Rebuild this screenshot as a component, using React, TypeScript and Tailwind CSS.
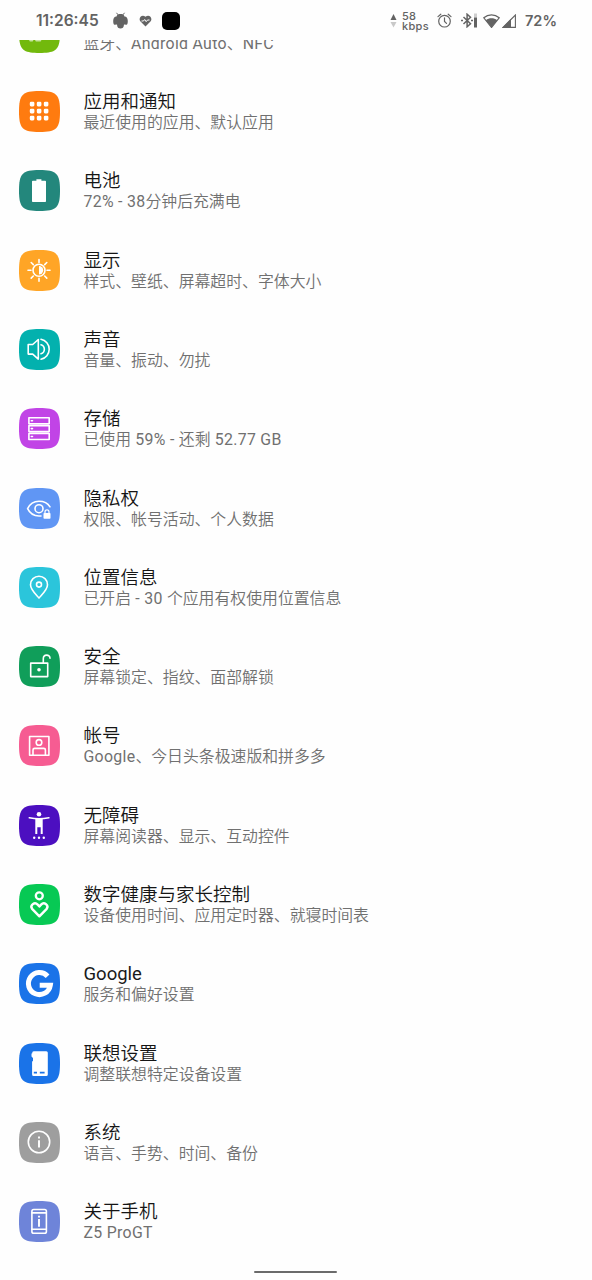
import type { ReactNode } from 'react';

interface SettingItem {
  title?: string;
  summary: string;
  color: string;
  icon: ReactNode;
}

const items: SettingItem[] = [
  {
    summary: '蓝牙、Android Auto、NFC',
    color: '#72b90c',
    icon: <path d="M11 28.6h2.500M17 28.600h4.500" strokeWidth="1.6" opacity=".6" />,
  },
  {
    title: '应用和通知',
    summary: '最近使用的应用、默认应用',
    color: '#ff7b0f',
    icon: (
      <g fill="#fff" stroke="none">
        {[13, 20, 27].map((y) =>
          [13, 20, 27].map((x) => (
            <rect key={`${x}-${y}`} x={x - 2.2} y={y - 2.2} width="4.6" height="4.6" rx="1.3" />
          ))
        )}
      </g>
    ),
  },
  {
    title: '电池',
    summary: '72% - 38分钟后充满电',
    color: '#23877c',
    icon: (
      <path
        d="M17.4 9.2h5v1.6h3.8q.8 0 .8.8v19.6q0 .8-.8.8H13.8q-.8 0-.8-.8V11.6q0-.8.8-.8h3.6z"
        fill="#fff"
        stroke="none"
      />
    ),
  },
  {
    title: '显示',
    summary: '样式、壁纸、屏幕超时、字体大小',
    color: '#ffa526',
    icon: (
      <>
        <circle cx="20" cy="20.3" r="6" />
        <path d="M20 16.1a4.2 4.2 0 0 1 0 8.4z" fill="#fff" stroke="none" />
        <path d="M20 9.5v3M20 28.2v3M9 20.3h3M28 20.3h3M12.2 12.5l2.1 2.1M25.7 26l2.1 2.1M12.2 28.1l2.1-2.1M25.7 14.6l2.1-2.1" />
      </>
    ),
  },
  {
    title: '声音',
    summary: '音量、振动、勿扰',
    color: '#03b1ae',
    icon: (
      <path d="M19.3 10.5v19.6l-5.6-5H9.2v-9.6h4.5zM22 10.200a10.200 10.200 0 0 1 0 20M22 15.800a4.700 4.700 0 0 1 0 9" />
    ),
  },
  {
    title: '存储',
    summary: '已使用 59% - 还剩 52.77 GB',
    color: '#c144e6',
    icon: (
      <>
        <path d="M9.9 9.7h20.3v6H9.9zM9.9 17.6h20.3v6H9.9zM9.9 25.5h20.3v6H9.9z" />
        <path d="M12.300 12.700h1.200M12.300 20.600h1.200M12.300 28.500h1.200" />
      </>
    ),
  },
  {
    title: '隐私权',
    summary: '权限、帐号活动、个人数据',
    color: '#6096f4',
    icon: (
      <>
        <path d="M31 18.8C29 15.500 25 13.200 20 13.200c-5.500 0-9.500 3.300-11.400 7.500 1.900 4 5.900 7.300 11.400 7.300h2" />
        <circle cx="20" cy="20.7" r="4" />
        <rect x="24.5" y="25" width="7" height="5.8" rx=".8" fill="#fff" stroke="none" />
        <path d="M26 25.5v-1.6a2 2 0 0 1 4 0v1.6" strokeWidth="1.2" />
      </>
    ),
  },
  {
    title: '位置信息',
    summary: '已开启 - 30 个应用有权使用位置信息',
    color: '#2bc5db',
    icon: (
      <>
        <path d="M20 31c-1.5-2-8.500-8-8.500-13.300a8.500 8.500 0 0 1 17 0C28.500 23 21.500 29 20 31z" />
        <circle cx="20" cy="17.6" r="2.5" />
      </>
    ),
  },
  {
    title: '安全',
    summary: '屏幕锁定、指纹、面部解锁',
    color: '#109e5a',
    icon: (
      <>
        <path d="M11.7 17.1h17v13.5h-17zM24.3 17v-4.3c0-4.700 6.700-4.700 6.700-.4" />
        <circle cx="20" cy="23.8" r="1.8" fill="#fff" stroke="none" />
      </>
    ),
  },
  {
    title: '帐号',
    summary: 'Google、今日头条极速版和拼多多',
    color: '#f65c92',
    icon: (
      <>
        <path d="M10.6 11.5h19.3v18.7H10.6zM14 30v-5q0-1.6 1.6-1.6h9.2q1.6 0 1.6 1.6v5" />
        <circle cx="20" cy="17.4" r="2.8" />
      </>
    ),
  },
  {
    title: '无障碍',
    summary: '屏幕阅读器、显示、互动控件',
    color: '#4c0fc0',
    icon: (
      <>
        <g fill="#fff" stroke="none">
          <circle cx="20" cy="9.2" r="2.3" />
          <circle cx="15.2" cy="32.8" r="1.2" />
          <circle cx="20" cy="32.8" r="1.2" />
          <circle cx="24.8" cy="32.8" r="1.2" />
          <path d="M16.3 13.5h7.4V29h-2v-6.700h-3.400V29h-2z" />
        </g>
        <path d="M10.3 12.7q9.7 2.2 19.6 0" />
      </>
    ),
  },
  {
    title: '数字健康与家长控制',
    summary: '设备使用时间、应用定时器、就寝时间表',
    color: '#07c954',
    icon: (
      <>
        <circle cx="20.3" cy="11.8" r="3.5" strokeWidth="2.3" />
        <path
          d="M20.4 32.3l-7.3-7.5c-2.500-3.500 2.500-7.600 5.600-4.200l1.700 1.900 1.700-1.900c3.100-3.400 8.100.7 5.600 4.200z"
          strokeWidth="2.4"
        />
      </>
    ),
  },
  {
    title: 'Google',
    summary: '服务和偏好设置',
    color: '#1a73e8',
    icon: (
      <path d="M28.6 13.2A11 11 0 1 0 31.300 22.300H20.700" strokeWidth="5" strokeLinecap="butt" strokeLinejoin="miter" />
    ),
  },
  {
    title: '联想设置',
    summary: '调整联想特定设备设置',
    color: '#1a73e8',
    icon: (
      <>
        <path
          d="M14.8 8.300h12.500q1.500 0 1.500 1.500v21.600q0 1.500-1.500 1.500H14.600q-1.500 0-1.500-1.500V18.300h.9v-3.300l-1.500-1.500V10.500h.6q0-2.200 1.700-2.200z"
          fill="#fff"
          stroke="none"
        />
        <path d="M14.800 29.600h3.200M20.800 29.600h4.800" stroke="#1a73e8" strokeWidth="1.9" strokeLinecap="butt" />
      </>
    ),
  },
  {
    title: '系统',
    summary: '语言、手势、时间、备份',
    color: '#9e9e9e',
    icon: (
      <>
        <circle cx="20" cy="20" r="10.7" />
        <path d="M20 18.300v7.200M20 14.500v1.900" strokeWidth="1.900" strokeLinecap="butt" />
      </>
    ),
  },
  {
    title: '关于手机',
    summary: 'Z5 ProGT',
    color: '#6e84d9',
    icon: (
      <>
        <rect x="12.9" y="8.5" width="14.5" height="23.7" rx="1.8" />
        <path d="M13 11.9h14M13 28.3h14" />
        <path d="M20 18v7.800M20 14.700v1.800" strokeWidth="1.900" strokeLinecap="butt" />
      </>
    ),
  },
];

// Latin runs are set a little wider than the Chinese text around them
const Summary = ({ text }: { text: string }) => (
  <div className="text-[15.87px] leading-[22px] font-[350] text-[#707070]">
    {text.split(/([ -~]+)/).map((part, i) =>
      i % 2 ? (
        <span key={i} className="font-normal tracking-[0.3px]">
          {part}
        </span>
      ) : (
        part
      )
    )}
  </div>
);

const SettingRow = ({ item }: { item: SettingItem }) => (
  <li className="flex h-[79.32px] shrink-0 items-center pl-[19px]">
    <svg
      className="h-[41px] w-[41px] shrink-0"
      viewBox="0 0 41 41"
      fill="none"
      stroke="#fff"
      strokeWidth="1.6"
      strokeLinecap="round"
      strokeLinejoin="round"
    >
      <path
        d="M0 20.5C0 3.500 3.500 0 20.500 0S41 3.500 41 20.500 37.500 41 20.500 41 0 37.500 0 20.500z"
        fill={item.color}
        stroke="none"
      />
      {item.icon}
    </svg>
    <div className="ml-[23.5px] whitespace-nowrap">
      <div
        className={
          item.title === 'Google'
            ? 'h-[23px] text-[18.5px] leading-[27px] font-normal text-[#1a1a1a]'
            : 'h-[23px] text-[18.5px] leading-[26px] font-[350] text-[#151515]'
        }
      >
        {item.title}
      </div>
      <Summary text={item.summary} />
    </div>
  </li>
);

const StatusBar = () => (
  <header className="flex h-10 shrink-0 items-center pl-[36px] font-['Inter',sans-serif] text-[#636363]">
    <span className="mt-[1px] w-[77px] text-[15.5px] leading-5 font-semibold">11:26:45</span>
    <svg className="mt-[1px] h-[17px] w-[15px]" viewBox="0 0 15 17" fill="currentColor">
      <path d="M3.5 4.5C4 2.500 5.500 2 7.500 2s3.500.5 4 2.500c2.200 0 3.300 2 3.300 4.500 0 2-.5 3.800-1.300 3.800L11 12.500c-.2 3-1.500 4-3.500 4s-3.300-1-3.500-4l-2.500.3C.7 12.800.2 11 .2 9c0-2.500 1.100-4.500 3.300-4.500z" />
      <path d="M3.500.8l1.500 2M11.500.8l-1.500 2" stroke="currentColor" />
    </svg>
    <svg className="mt-[2px] ml-[11px] h-[12px] w-[13px]" viewBox="0 0 13 12">
      <path d="M6.500 11.500L1.300 6.300C-1 3 3-1.500 6.500 1.800 10-1.500 14 3 11.700 6.300z" fill="currentColor" />
      <path d="M2.500 6h2l1.200-1.500 1.500 2.200L8.500 5h2" stroke="#fff" fill="none" />
    </svg>
    <div className="mt-[2px] ml-[10px] h-[18px] w-[18px] rounded-[5px] bg-black" />

    <svg className="ml-[210px] h-[15px] w-[7px]" viewBox="0 0 7 15">
      <path d="M3.500 1l3 6h-6z" fill="currentColor" />
      <path d="M3.500 14.500l-3-5.500h6z" fill="#c9c9c9" />
    </svg>
    <div className="mt-[1px] ml-[5px] w-[35px] text-[11px] leading-[10px] font-medium">
      <div className="tracking-[0.3px]">58</div>
      <div className="tracking-[0.3px]">kbps</div>
    </div>
    <svg className="mt-[1px] h-[15px] w-[15px]" viewBox="0 0 15 15" fill="none" stroke="currentColor" strokeWidth="1.2" strokeLinecap="round">
      <circle cx="7.5" cy="8.200" r="5.800" />
      <path d="M7.500 4.800v3.600l2 2M1 3.600L3.800 1.200M14 3.600l-2.800-2.400" />
    </svg>
    <svg className="mt-[1px] ml-[9px] h-[15px] w-[17px]" viewBox="0 0 17 15" fill="none">
      <path d="M2.500 4l7 6.800-3.400 3V1.200l3.400 3-7 6.800" stroke="currentColor" strokeWidth="1.500" />
      <path d="M0 7.500h2M10 7.500h2" stroke="currentColor" strokeWidth="1.600" />
      <path d="M14.500.5v4" stroke="#cfcfcf" strokeWidth="3" />
      <path d="M14.500 4.500v10" stroke="currentColor" strokeWidth="3" />
    </svg>
    <svg className="mt-[1px] ml-[5px] h-[14px] w-[17px]" viewBox="0 0 17 14">
      <path d="M8.500 13.500L.8 3.800c4.500-4 10.900-4 15.400 0z" fill="none" stroke="currentColor" strokeWidth="1.200" />
      <path d="M8.500 13.500L2.800 6.300c3.500-2.600 7.900-2.600 11.400 0z" fill="currentColor" />
    </svg>
    <svg className="mt-[1px] ml-[2px] h-[14px] w-[14px]" viewBox="0 0 14 14">
      <path d="M1 13.400L13.400 1v12.400z" fill="none" stroke="currentColor" strokeWidth="1.100" />
      <path d="M.5 13.500l8.500-8.500v8.500z" fill="currentColor" />
    </svg>
    <span className="mt-[1px] ml-[9px] text-[14.5px] leading-5 font-semibold">72%</span>
  </header>
);

const App = () => {
  return (
    <main className="flex h-[1280px] w-[592px] flex-col overflow-hidden bg-[#fefefe] font-['Roboto','Noto_Sans_CJK_SC',sans-serif]">
      <StatusBar />
      <div className="h-[1224px] shrink-0 overflow-hidden">
        <ul className="-mt-[47.5px] flex flex-col">
          {items.map((item) => (
            <SettingRow key={item.summary} item={item} />
          ))}
        </ul>
      </div>
      <div className="mt-[7px] ml-[254px] h-[2px] w-[83px] shrink-0 rounded-full bg-[#6b6b6b]" />
    </main>
  );
};

export default App;
